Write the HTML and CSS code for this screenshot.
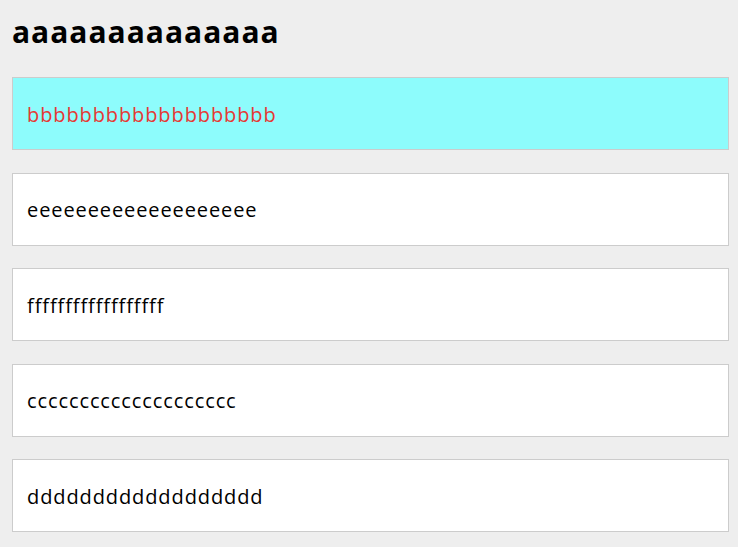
FILE: index.html
```html
<!DOCTYPE html>
<html>
<head>
<meta charset="utf-8">
<link rel="stylesheet" href="styles.css">
</head>
<body>
<h1 class="title">aaaaaaaaaaaaaa</h1>
<div class="list">
  <div class="item active">bbbbbbbbbbbbbbbbbbb</div>
  <div class="item">eeeeeeeeeeeeeeeeeee</div>
  <div class="item">ffffffffffffffffff</div>
  <div class="item">cccccccccccccccccccc</div>
  <div class="item">dddddddddddddddddd</div>
</div>
</body>
</html>
```
FILE: styles.css
```css
html, body { margin: 0; padding: 0; }
body {
  background: #eeeeee;
  font-family: "Open Sans", "Noto Sans", sans-serif;
  padding: 12px 9px 0 12px;
  color: #000;
}
.title {
  margin: 0;
  font-size: 30px;
  font-weight: 700;
  letter-spacing: 1px;
  line-height: 40px;
  height: 40px;
  margin-bottom: 25px;
}
.list {
  display: flex;
  flex-direction: column;
  gap: 22.5px;
}
.item {
  background: #fff;
  border: 1px solid #cccccc;
  box-sizing: content-box;
  padding: 2px 14px 0;
  height: 69px;
  display: flex;
  align-items: center;
  font-size: 20px;
  letter-spacing: 0.9px;
  line-height: 24px;
}
.item.active {
  background: #8dfcfc;
  color: #e53935;
}
```
